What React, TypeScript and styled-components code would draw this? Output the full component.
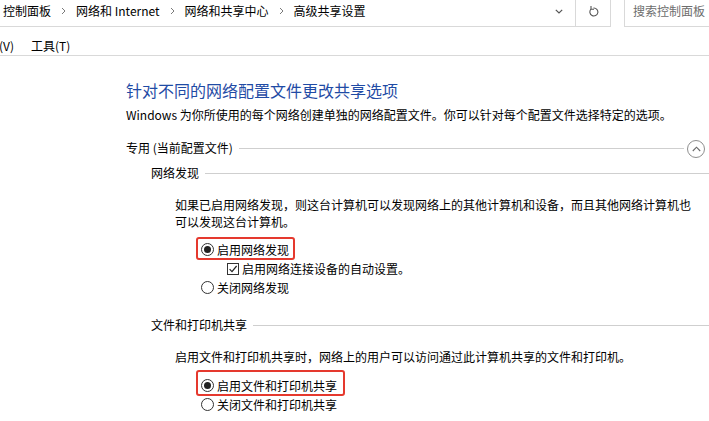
import React from 'react';
import styled, { createGlobalStyle } from 'styled-components';

const Global = createGlobalStyle`
  html, body { margin: 0; padding: 0; background: #fff; overflow: hidden; }
  body { font-family: "Noto Sans CJK SC", "Noto Sans", sans-serif; color: #000; }
  #root { width: 709px; height: 421px; overflow: hidden; }
`;

const Window = styled.div`
  display: flex;
  flex-direction: column;
  width: 709px;
  height: 421px;
  overflow: hidden;
  background: #fff;
`;

const TopBar = styled.div`
  display: flex;
  height: 27px;
  flex-shrink: 0;
  gap: 13px;
`;

const AddressBox = styled.div`
  flex: 1;
  display: flex;
  align-items: stretch;
  height: 27px;
  box-sizing: border-box;
  border-right: 1px solid #d9d9d9;
  border-bottom: 1px solid #d9d9d9;
`;

const Crumbs = styled.div`
  flex: 1;
  display: flex;
  align-items: center;
  padding: 0 0 4px 3px;
  font-size: 12px;
  line-height: 16px;
  white-space: nowrap;
`;

const Crumb = styled.span`
  color: #000;
`;

const CrumbSep = styled.span`
  display: inline-flex;
  margin: 0 10px;
  color: #7a7a7a;
`;

const BarButton = styled.div<{ $divider?: boolean }>`
  width: 34px;
  display: flex;
  align-items: center;
  justify-content: center;
  padding-bottom: 4px;
  box-sizing: border-box;
  border-right: ${(p) => (p.$divider ? '1px solid #d9d9d9' : 'none')};
  color: #555;
`;

const SearchBox = styled.div`
  width: 85px;
  height: 27px;
  box-sizing: border-box;
  border-left: 1px solid #d9d9d9;
  border-bottom: 1px solid #d9d9d9;
  display: flex;
  align-items: center;
  padding: 0 0 4px 8px;
  font-size: 12px;
  line-height: 16px;
  color: #6d6d6d;
  white-space: nowrap;
  overflow: hidden;
`;

const MenuBar = styled.div`
  display: flex;
  align-items: flex-end;
  gap: 17px;
  height: 29px;
  flex-shrink: 0;
  box-sizing: border-box;
  border-bottom: 1px solid #d9d9d9;
  padding: 0 0 1px 0;
  margin-left: -1px;
`;

const MenuItem = styled.span`
  font-size: 12px;
  line-height: 16px;
  color: #000;
  white-space: nowrap;
`;

const Content = styled.div`
  display: flex;
  flex-direction: column;
  padding: 23px 0 0 126px;
`;

const Heading = styled.h1`
  margin: 0;
  font-size: 16px;
  line-height: 22px;
  font-weight: normal;
  color: #1f4ba5;
  white-space: nowrap;
`;

const Desc = styled.p`
  margin: 5px 0 0;
  font-size: 12px;
  line-height: 18px;
  white-space: nowrap;
`;

const ProfileHeader = styled.div`
  display: flex;
  align-items: center;
  height: 20px;
  margin-top: 14px;
`;

const HeaderLabel = styled.span`
  font-size: 12px;
  line-height: 18px;
  white-space: nowrap;
`;

const Rule = styled.div<{ $gapRight?: number }>`
  flex: 1;
  height: 1px;
  background: #cfcfcf;
  margin-left: 6px;
  margin-right: ${(p) => p.$gapRight ?? 0}px;
`;

const CollapseButton = styled.div`
  width: 18px;
  height: 18px;
  box-sizing: border-box;
  border: 1px solid #8e8e8e;
  border-radius: 50%;
  display: flex;
  align-items: center;
  justify-content: center;
  margin-right: 4px;
  color: #6a6a6a;
  margin-top: 2px;
`;

const Section = styled.section<{ $top: number }>`
  display: flex;
  flex-direction: column;
  padding-left: 25px;
  margin-top: ${(p) => p.$top}px;
`;

const SubHeader = styled.div`
  display: flex;
  align-items: center;
  height: 18px;
`;

const SectionBody = styled.div`
  display: flex;
  flex-direction: column;
  padding-left: 24px;
`;

const Para = styled.p`
  margin: 13.5px 0 0;
  font-size: 12px;
  line-height: 17px;
  white-space: nowrap;
`;

const Options = styled.div<{ $top: number }>`
  display: flex;
  flex-direction: column;
  align-items: flex-start;
  padding-left: 26px;
  margin-top: ${(p) => p.$top}px;
`;

const OptionRow = styled.label<{ $indent?: number }>`
  position: relative;
  display: inline-flex;
  align-items: center;
  gap: 3px;
  height: 19px;
  margin-left: ${(p) => p.$indent ?? 0}px;
  font-size: 12px;
  line-height: 17px;
  white-space: nowrap;
`;

const Radio = styled.span<{ $checked?: boolean }>`
  width: 13px;
  height: 13px;
  box-sizing: border-box;
  border: 1px solid #333;
  border-radius: 50%;
  display: inline-flex;
  align-items: center;
  justify-content: center;
  flex-shrink: 0;
  background: #fff;
  &::after {
    content: '';
    width: 7px;
    height: 7px;
    border-radius: 50%;
    background: ${(p) => (p.$checked ? '#222' : 'transparent')};
  }
`;

const CheckBox = styled.span`
  width: 12px;
  height: 12px;
  box-sizing: border-box;
  border: 1px solid #333;
  display: inline-flex;
  align-items: center;
  justify-content: center;
  flex-shrink: 0;
  background: #fff;
`;

const Mark = styled.span<{ $t: number; $r: number; $b: number; $l: number }>`
  position: absolute;
  top: ${(p) => p.$t}px;
  right: ${(p) => p.$r}px;
  bottom: ${(p) => p.$b}px;
  left: ${(p) => p.$l}px;
  border: 2px solid #e5392e;
  border-radius: 3px;
  pointer-events: none;
`;

const ChevronRight = () => (
  <svg width="5" height="8" viewBox="0 0 5 8">
    <path d="M1 1 L4 4 L1 7" fill="none" stroke="currentColor" strokeWidth="1" />
  </svg>
);

const ChevronDown = () => (
  <svg width="8" height="5" viewBox="0 0 8 5">
    <path d="M0.8 0.8 L4 4 L7.2 0.8" fill="none" stroke="currentColor" strokeWidth="1.2" />
  </svg>
);

const RefreshIcon = () => (
  <svg width="11" height="12" viewBox="0 0 11 12">
    <path d="M3 4.2 A4 4 0 1 0 5.5 3" fill="none" stroke="currentColor" strokeWidth="1.1" />
    <path d="M3 1 V4.2 H6" fill="none" stroke="currentColor" strokeWidth="1.1" />
  </svg>
);

const ChevronUp = () => (
  <svg width="9" height="6" viewBox="0 0 9 6">
    <path d="M0.8 5 L4.5 1.2 L8.2 5" fill="none" stroke="currentColor" strokeWidth="1.1" />
  </svg>
);

const CheckIcon = () => (
  <svg width="10" height="10" viewBox="0 0 10 10">
    <path d="M1.6 5.2 L4 7.6 L8.6 2" fill="none" stroke="#222" strokeWidth="1.2" />
  </svg>
);

type Opt = {
  kind: 'radio' | 'check';
  label: string;
  checked?: boolean;
  indent?: number;
  mark?: { t: number; r: number; b: number; l: number };
};

const OptionList: React.FC<{ items: Opt[]; top: number }> = ({ items, top }) => (
  <Options $top={top}>
    {items.map((o) => (
      <OptionRow key={o.label} $indent={o.indent}>
        {o.kind === 'radio' ? (
          <Radio $checked={o.checked} />
        ) : (
          <CheckBox>{o.checked && <CheckIcon />}</CheckBox>
        )}
        <span>{o.label}</span>
        {o.mark && <Mark $t={o.mark.t} $r={o.mark.r} $b={o.mark.b} $l={o.mark.l} />}
      </OptionRow>
    ))}
  </Options>
);

const crumbs = ['控制面板', '网络和 Internet', '网络和共享中心', '高级共享设置'];

export default function App() {
  return (
    <>
      <Global />
      <Window>
        <TopBar>
          <AddressBox>
            <Crumbs>
              {crumbs.map((c, i) => (
                <React.Fragment key={c}>
                  {i > 0 && (
                    <CrumbSep>
                      <ChevronRight />
                    </CrumbSep>
                  )}
                  <Crumb>{c}</Crumb>
                </React.Fragment>
              ))}
            </Crumbs>
            <BarButton $divider>
              <ChevronDown />
            </BarButton>
            <BarButton>
              <RefreshIcon />
            </BarButton>
          </AddressBox>
          <SearchBox>搜索控制面板</SearchBox>
        </TopBar>
        <MenuBar>
          <MenuItem>(V)</MenuItem>
          <MenuItem>工具(T)</MenuItem>
        </MenuBar>
        <Content>
          <Heading>针对不同的网络配置文件更改共享选项</Heading>
          <Desc>Windows 为你所使用的每个网络创建单独的网络配置文件。你可以针对每个配置文件选择特定的选项。</Desc>
          <ProfileHeader>
            <HeaderLabel>专用 (当前配置文件)</HeaderLabel>
            <Rule $gapRight={3} />
            <CollapseButton>
              <ChevronUp />
            </CollapseButton>
          </ProfileHeader>
          <Section $top={6}>
            <SubHeader>
              <HeaderLabel>网络发现</HeaderLabel>
              <Rule />
            </SubHeader>
            <SectionBody>
              <Para>
                如果已启用网络发现，则这台计算机可以发现网络上的其他计算机和设备，而且其他网络计算机也
                <br />
                可以发现这台计算机。
              </Para>
              <OptionList
                top={10.5}
                items={[
                  { kind: 'radio', label: '启用网络发现', checked: true, mark: { t: -3, r: -6, b: -1, l: -5 } },
                  { kind: 'check', label: '启用网络连接设备的自动设置。', checked: true, indent: 26 },
                  { kind: 'radio', label: '关闭网络发现' },
                ]}
              />
            </SectionBody>
          </Section>
          <Section $top={19}>
            <SubHeader>
              <HeaderLabel>文件和打印机共享</HeaderLabel>
              <Rule />
            </SubHeader>
            <SectionBody>
              <Para>启用文件和打印机共享时，网络上的用户可以访问通过此计算机共享的文件和打印机。</Para>
              <OptionList
                top={11}
                items={[
                  { kind: 'radio', label: '启用文件和打印机共享', checked: true, mark: { t: -6, r: -8, b: -1.5, l: -5 } },
                  { kind: 'radio', label: '关闭文件和打印机共享' },
                ]}
              />
            </SectionBody>
          </Section>
        </Content>
      </Window>
    </>
  );
}
